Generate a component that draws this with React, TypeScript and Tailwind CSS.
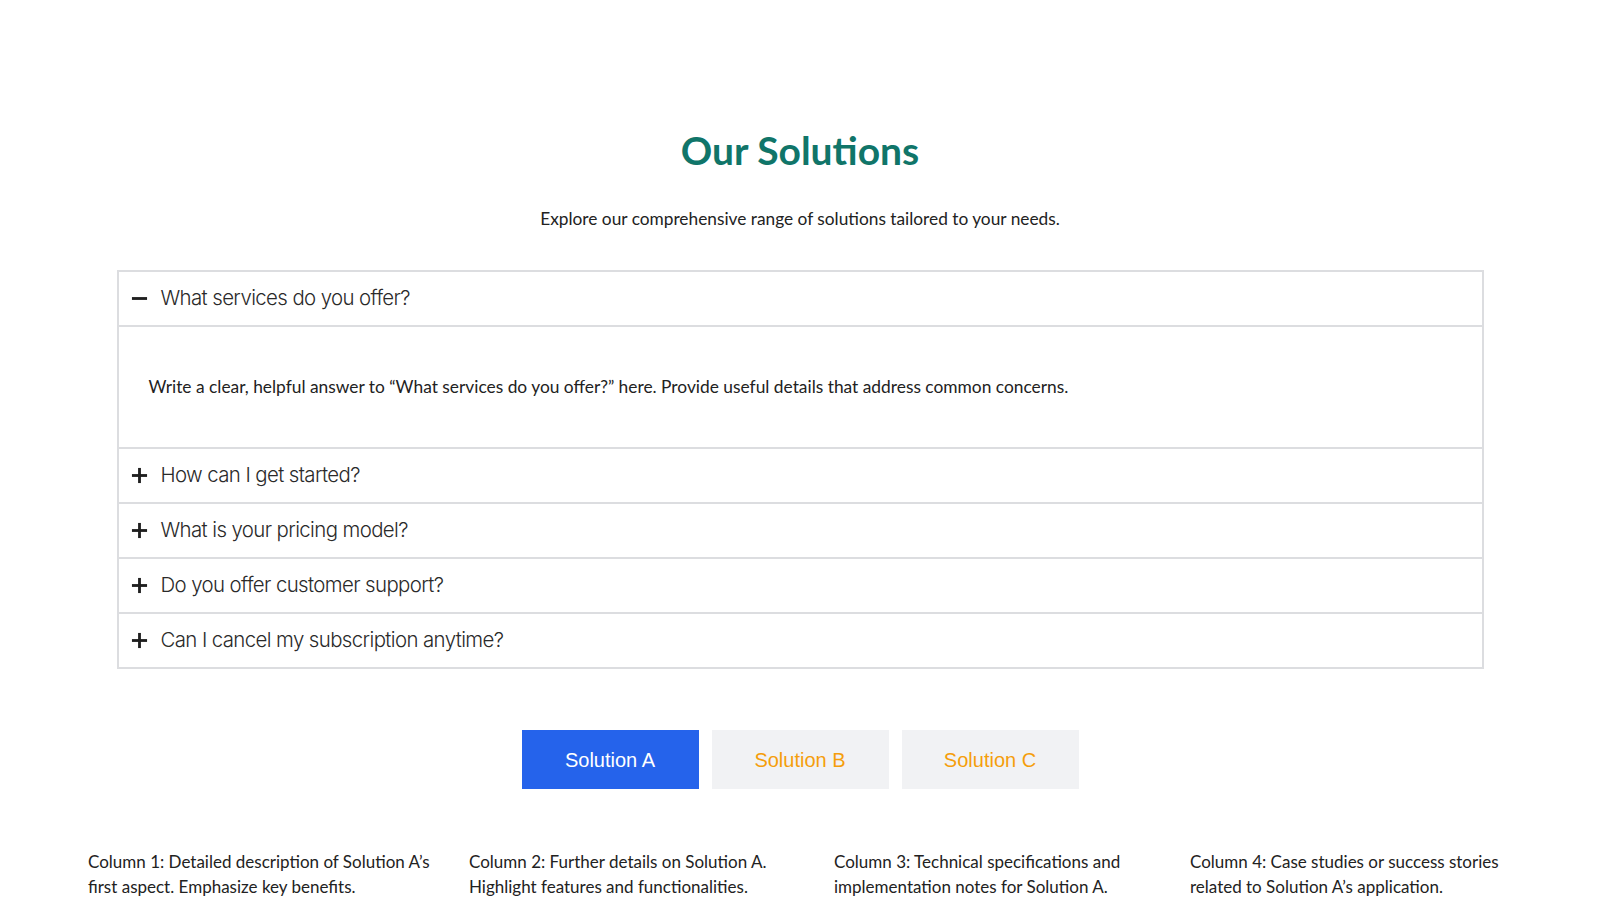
import { useState } from 'react'

const faqs = [
  'What services do you offer?',
  'How can I get started?',
  'What is your pricing model?',
  'Do you offer customer support?',
  'Can I cancel my subscription anytime?',
]

const columns = [
  { w: 'w-[381px]', text: 'Column 1: Detailed description of Solution A’s first aspect. Emphasize key benefits.' },
  { w: 'w-[365px]', text: 'Column 2: Further details on Solution A. Highlight features and functionalities.' },
  { w: 'w-[356px]', text: 'Column 3: Technical specifications and implementation notes for Solution A.' },
  { w: 'w-[350px]', text: 'Column 4: Case studies or success stories related to Solution A’s application.' },
]

function Minus() {
  return (
    <svg width="17" height="17" viewBox="0 0 18 18" className="shrink-0">
      <rect x="1" y="7.5" width="16" height="3" fill="#1f1f1f" />
    </svg>
  )
}

function Plus() {
  return (
    <svg width="17" height="17" viewBox="0 0 18 18" className="shrink-0">
      <rect x="1" y="7.5" width="16" height="3" fill="#1f1f1f" />
      <rect x="7.5" y="1" width="3" height="16" fill="#1f1f1f" />
    </svg>
  )
}

export default function App() {
  const [open, setOpen] = useState(0)
  const [tab, setTab] = useState(0)

  return (
    <div className="w-full h-[900px] overflow-hidden bg-white font-['Lato',sans-serif] text-[#1f2328]">
      <section className="pt-[128px] flex flex-col items-center">
        <h1 className="text-[39px] leading-[44px] font-bold text-[#107569]">Our Solutions</h1>
        <p className="mt-[35px] text-[17.3px] leading-6 text-[#222]">
          Explore our comprehensive range of solutions tailored to your needs.
        </p>

        <div className="mt-[39px] w-[1367px] border-2 border-[#dcdde0]">
          {faqs.map((q, i) => (
            <div key={q} className={i < faqs.length - 1 ? 'border-b-2 border-[#dcdde0]' : ''}>
              <button
                onClick={() => setOpen(open === i ? -1 : i)}
                className="w-full h-[53px] flex items-center gap-[13px] px-[12px] text-left"
              >
                {open === i ? <Minus /> : <Plus />}
                <span className="font-['Inter',sans-serif] font-light text-[20.4px] text-[#2a2a2a] tracking-[-0.6px]">{q}</span>
              </button>
              {open === i && (
                <div className="border-t-2 border-[#dcdde0] h-[122px] flex items-center px-[30px]">
                  <p className="text-[17.35px] text-[#222]">
                    Write a clear, helpful answer to “{q}” here. Provide useful details that address common concerns.
                  </p>
                </div>
              )}
            </div>
          ))}
        </div>

        <div className="mt-[61px] flex gap-[13px] font-['Liberation_Sans',Arial,sans-serif] text-[20px]">
          {['Solution A', 'Solution B', 'Solution C'].map((s, i) => (
            <button
              key={s}
              onClick={() => setTab(i)}
              className={
                'w-[177px] h-[59px] flex items-center justify-center ' +
                (tab === i ? 'bg-[#2563eb] text-white' : 'bg-[#f1f2f4] text-[#f59e0b]')
              }
            >
              {s}
            </button>
          ))}
        </div>
      </section>

      <div className="mt-[60px] pl-[88px] flex">
        {columns.map((c) => (
          <p key={c.text} className={c.w + ' pr-[24px] text-[17px] leading-[25px] text-[#222]'}>
            {c.text}
          </p>
        ))}
      </div>
    </div>
  )
}
